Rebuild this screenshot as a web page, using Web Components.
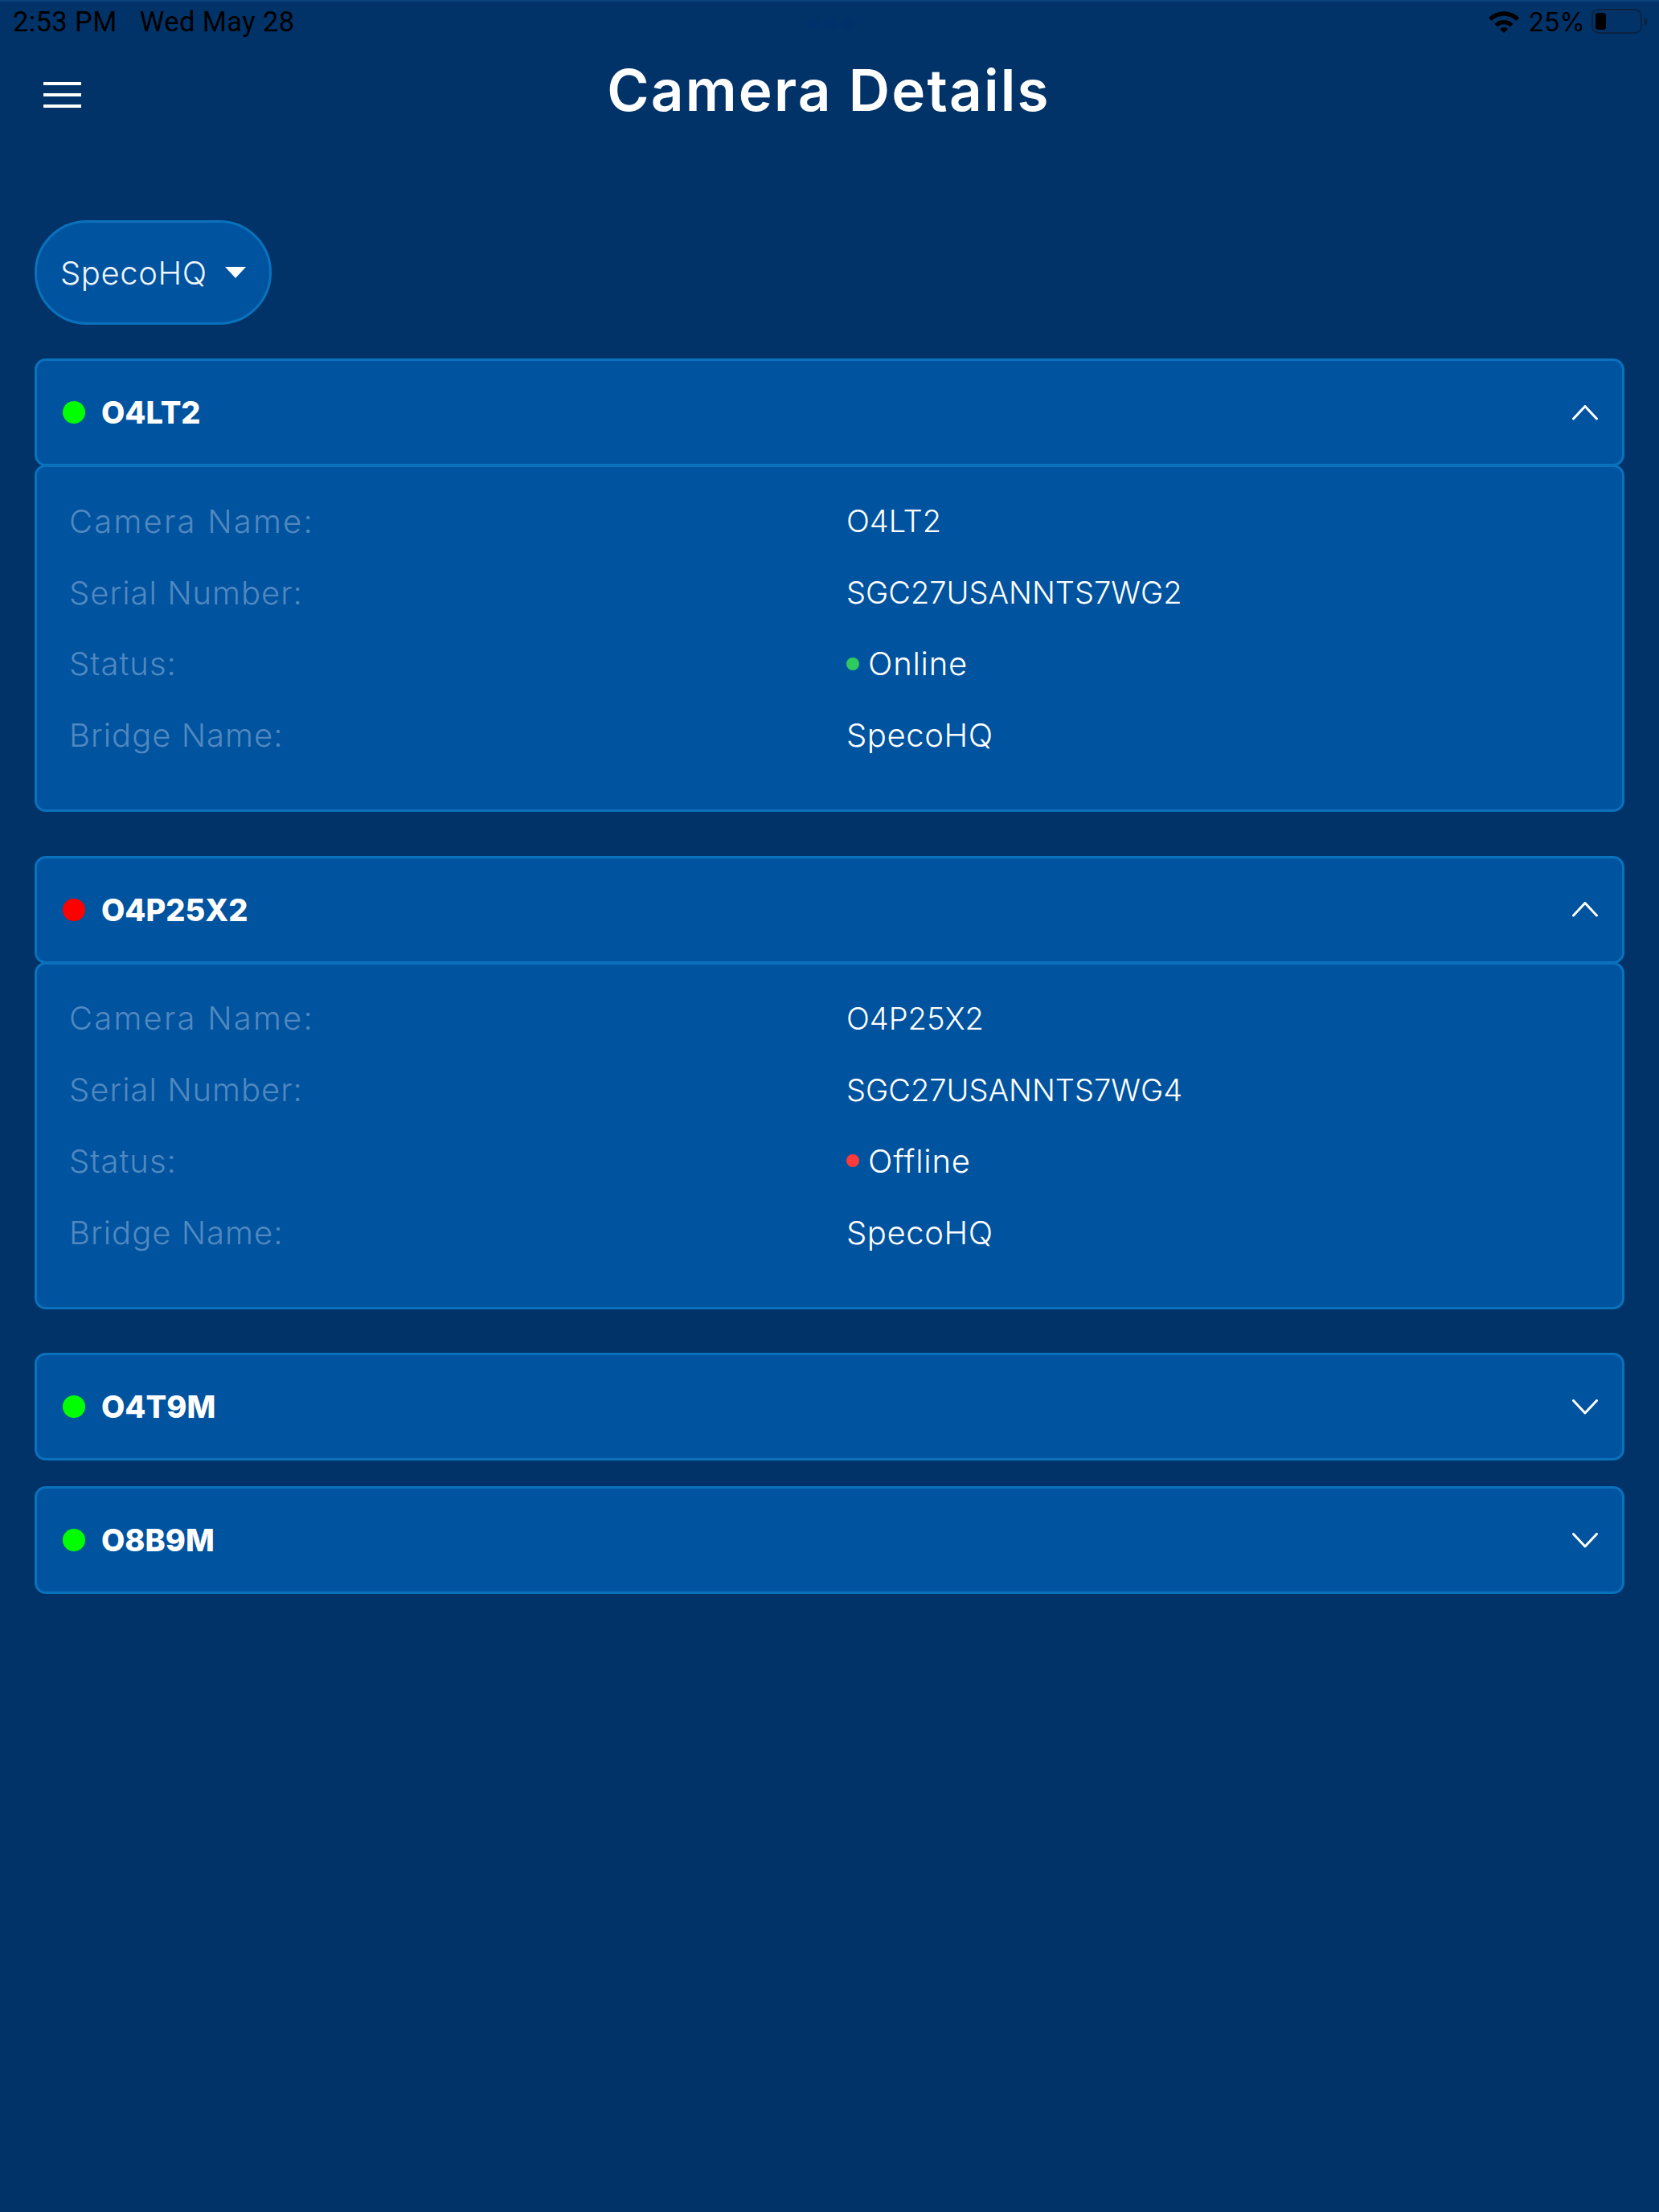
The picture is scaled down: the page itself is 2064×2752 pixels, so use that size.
<!DOCTYPE html>
<html>
<head>
<meta charset="utf-8">
<title>Camera Details</title>
<style>
  html, body { margin: 0; padding: 0; background: #013368; }
  body { font-family: Inter, "Liberation Sans", sans-serif; }
</style>
</head>
<body>
<camera-app>
  <camera-card name="O4LT2" serial="SGC27USANNTS7WG2" status="Online" bridge="SpecoHQ" open></camera-card>
  <camera-card name="O4P25X2" serial="SGC27USANNTS7WG4" status="Offline" bridge="SpecoHQ" open></camera-card>
  <camera-card name="O4T9M" status="Online"></camera-card>
  <camera-card name="O8B9M" status="Online"></camera-card>
</camera-app>

<script>
class StatusBar extends HTMLElement {
  constructor () {
    super()
    this.attachShadow({ mode: 'open' })
    this.shadowRoot.innerHTML = `
    <style>
      :host {
        display: flex;
        align-items: center;
        height: 52px;
        box-sizing: border-box;
        padding: 0 14px 0 16px;
        border-top: 2px solid #0b4279;
        color: #000;
        font: 400 34.5px Roboto, sans-serif;
        letter-spacing: 0.4px;
      }
      .date { margin-left: 28px; }
      .right { margin-left: auto; display: flex; align-items: center; }
      .pct { margin: 0 8px 0 12px; font-family: Inter, sans-serif; font-weight: 400; font-size: 32px; letter-spacing: 0; }
      .dots { position: absolute; left: 1005px; top: 22px; display: flex; gap: 9px; }
      .dots i { width: 13px; height: 13px; border-radius: 50%; background: #01306a; }
    </style>
    <span>2:53 PM</span><span class="date">Wed May 28</span>
    <div class="dots"><i></i><i></i><i></i></div>
    <div class="right">
      <svg width="38" height="28" viewBox="0 0 38 28">
        <path d="M0 9a27 27 0 0 1 38 0l-3.600 4a22 22 0 0 0-30.800 0z"/>
        <path d="M7.500 16.500a17 17 0 0 1 23 0l-3.600 4a11.500 11.500 0 0 0-15.800 0z"/>
        <path d="M14 23a7 7 0 0 1 10 0l-5 5z"/>
      </svg>
      <span class="pct">25%</span>
      <svg width="70" height="32" viewBox="0 0 70 32">
        <rect x="1" y="1" width="61" height="29" rx="8" fill="none" stroke="#0c2340" stroke-width="2"/>
        <rect x="5" y="5" width="13" height="21" rx="3.500" fill="#000"/>
        <path d="M66 10c2.500 1 3.500 3 3.500 5.500S68.500 20 66 21z" fill="#0c2340"/>
      </svg>
    </div>
    `
  }
}
customElements.define('status-bar', StatusBar)

class AppHeader extends HTMLElement {
  constructor () {
    super()
    this.attachShadow({ mode: 'open' })
    this.shadowRoot.innerHTML = `
    <style>
      :host {
        display: flex;
        align-items: center;
        height: 120px;
        padding-left: 54px;
      }
      .menu { display: flex; flex-direction: column; gap: 10px; width: 47px; margin-top: 12px; }
      .menu i { display: block; height: 4px; background: #fff; }
      h1 {
        flex: 1;
        margin: 0 0 0 -47px;
        padding-right: 56px;
        text-align: center;
        color: #fff;
        font: 600 71px Inter, sans-serif;
        letter-spacing: 2.2px;
      }
    </style>
    <div class="menu"><i></i><i></i><i></i></div>
    <h1><slot></slot></h1>
    `
  }
}
customElements.define('app-header', AppHeader)

class SiteSelect extends HTMLElement {
  constructor () {
    super()
    this.attachShadow({ mode: 'open' })
    this.shadowRoot.innerHTML = `
    <style>
      :host {
        display: flex;
        align-items: center;
        box-sizing: border-box;
        height: 130px;
        width: 295px;
        padding-left: 29px;
        border: 3px solid #0a72bd;
        border-radius: 65px;
        background: #00539f;
        color: #eef5fb;
        font: 300 40px Inter, sans-serif;
        letter-spacing: 0.6px;
      }
      svg { margin-left: 22px; }
    </style>
    <slot></slot>
    <svg width="26" height="14" viewBox="0 0 26 14"><path d="M0 0h26L13 14z" fill="#fff"/></svg>
    `
  }
}
customElements.define('site-select', SiteSelect)

class InfoRow extends HTMLElement {
  constructor () {
    super()
    this.attachShadow({ mode: 'open' })
    this.shadowRoot.innerHTML = `
    <style>
      :host {
        display: grid;
        grid-template-columns: 967px 1fr;
        align-items: center;
        height: 88.8px;
        font: 300 38px Inter, sans-serif;
      }
      .label { color: #5288c0; font-size: 40px; letter-spacing: var(--label-ls, 1px); }
      .value { color: #fff; font-size: var(--value-size, 38px); letter-spacing: var(--value-ls, 0); display: flex; align-items: center; }
      .dot { width: 16px; height: 16px; border-radius: 50%; margin-right: 11px; display: none; }
      :host([state="Online"]) .dot { display: block; background: #2fca5e; }
      :host([state="Offline"]) .dot { display: block; background: #ff3a3a; }
    </style>
    <span class="label"></span>
    <span class="value"><span class="dot"></span><slot></slot></span>
    `
    this.shadowRoot.querySelector('.label').textContent = this.getAttribute('label')
  }
}
customElements.define('info-row', InfoRow)

class CameraCard extends HTMLElement {
  constructor () {
    super()
    this.attachShadow({ mode: 'open' })
    const status = this.getAttribute('status')
    const open = this.hasAttribute('open')
    // chevron points up when the card is expanded
    const chevron = open ? 'M1.500 17 16 1.500 30.500 17' : 'M1.500 1.500 16 17 30.500 1.500'
    const body = open ? `
      <div class="body">
        <info-row label="Camera Name:" style="--label-ls: 2.2px">${this.getAttribute('name')}</info-row>
        <info-row label="Serial Number:">${this.getAttribute('serial')}</info-row>
        <info-row label="Status:" state="${status}" style="--value-size: 40px; --value-ls: 0.8px">${status}</info-row>
        <info-row label="Bridge Name:" style="--value-size: 40px; --value-ls: 0.6px">${this.getAttribute('bridge')}</info-row>
      </div>` : ''
    this.shadowRoot.innerHTML = `
    <style>
      :host { display: block; margin-bottom: 32px; }
      :host([open]) { margin-bottom: 54.5px; }
      .head, .body {
        box-sizing: border-box;
        background: #00539f;
        border: 3px solid #0a72bd;
        border-radius: 14px;
      }
      .head {
        display: flex;
        align-items: center;
        height: 134px;
        padding: 0 30px 0 32px;
        color: #fff;
        font: 800 38px Inter, sans-serif;
      }
      .dot { width: 28px; height: 28px; border-radius: 50%; margin-right: 20px; }
      .dot.on { background: #00ff00; }
      .dot.off { background: #ff0000; }
      svg { margin-left: auto; }
      .body { height: 432px; margin-top: -2px; padding: 23px 40px 0; }
    </style>
    <div class="head">
      <span class="dot ${status === 'Online' ? 'on' : 'off'}"></span>
      <span>${this.getAttribute('name')}</span>
      <svg width="32" height="19" viewBox="0 0 32 19"><path d="${chevron}" fill="none" stroke="#fff" stroke-width="3" stroke-linecap="round" stroke-linejoin="round"/></svg>
    </div>
    ${body}
    `
  }
}
customElements.define('camera-card', CameraCard)

class CameraApp extends HTMLElement {
  constructor () {
    super()
    this.attachShadow({ mode: 'open' })
    this.shadowRoot.innerHTML = `
    <style>
      :host { display: block; height: 2752px; background: #013368; overflow: hidden; }
      .content { padding: 102px 43px 0; }
      site-select { margin-bottom: 42px; }
    </style>
    <status-bar></status-bar>
    <app-header>Camera Details</app-header>
    <div class="content">
      <site-select>SpecoHQ</site-select>
      <slot></slot>
    </div>
    `
  }
}
customElements.define('camera-app', CameraApp)
</script>
</body>
</html>
